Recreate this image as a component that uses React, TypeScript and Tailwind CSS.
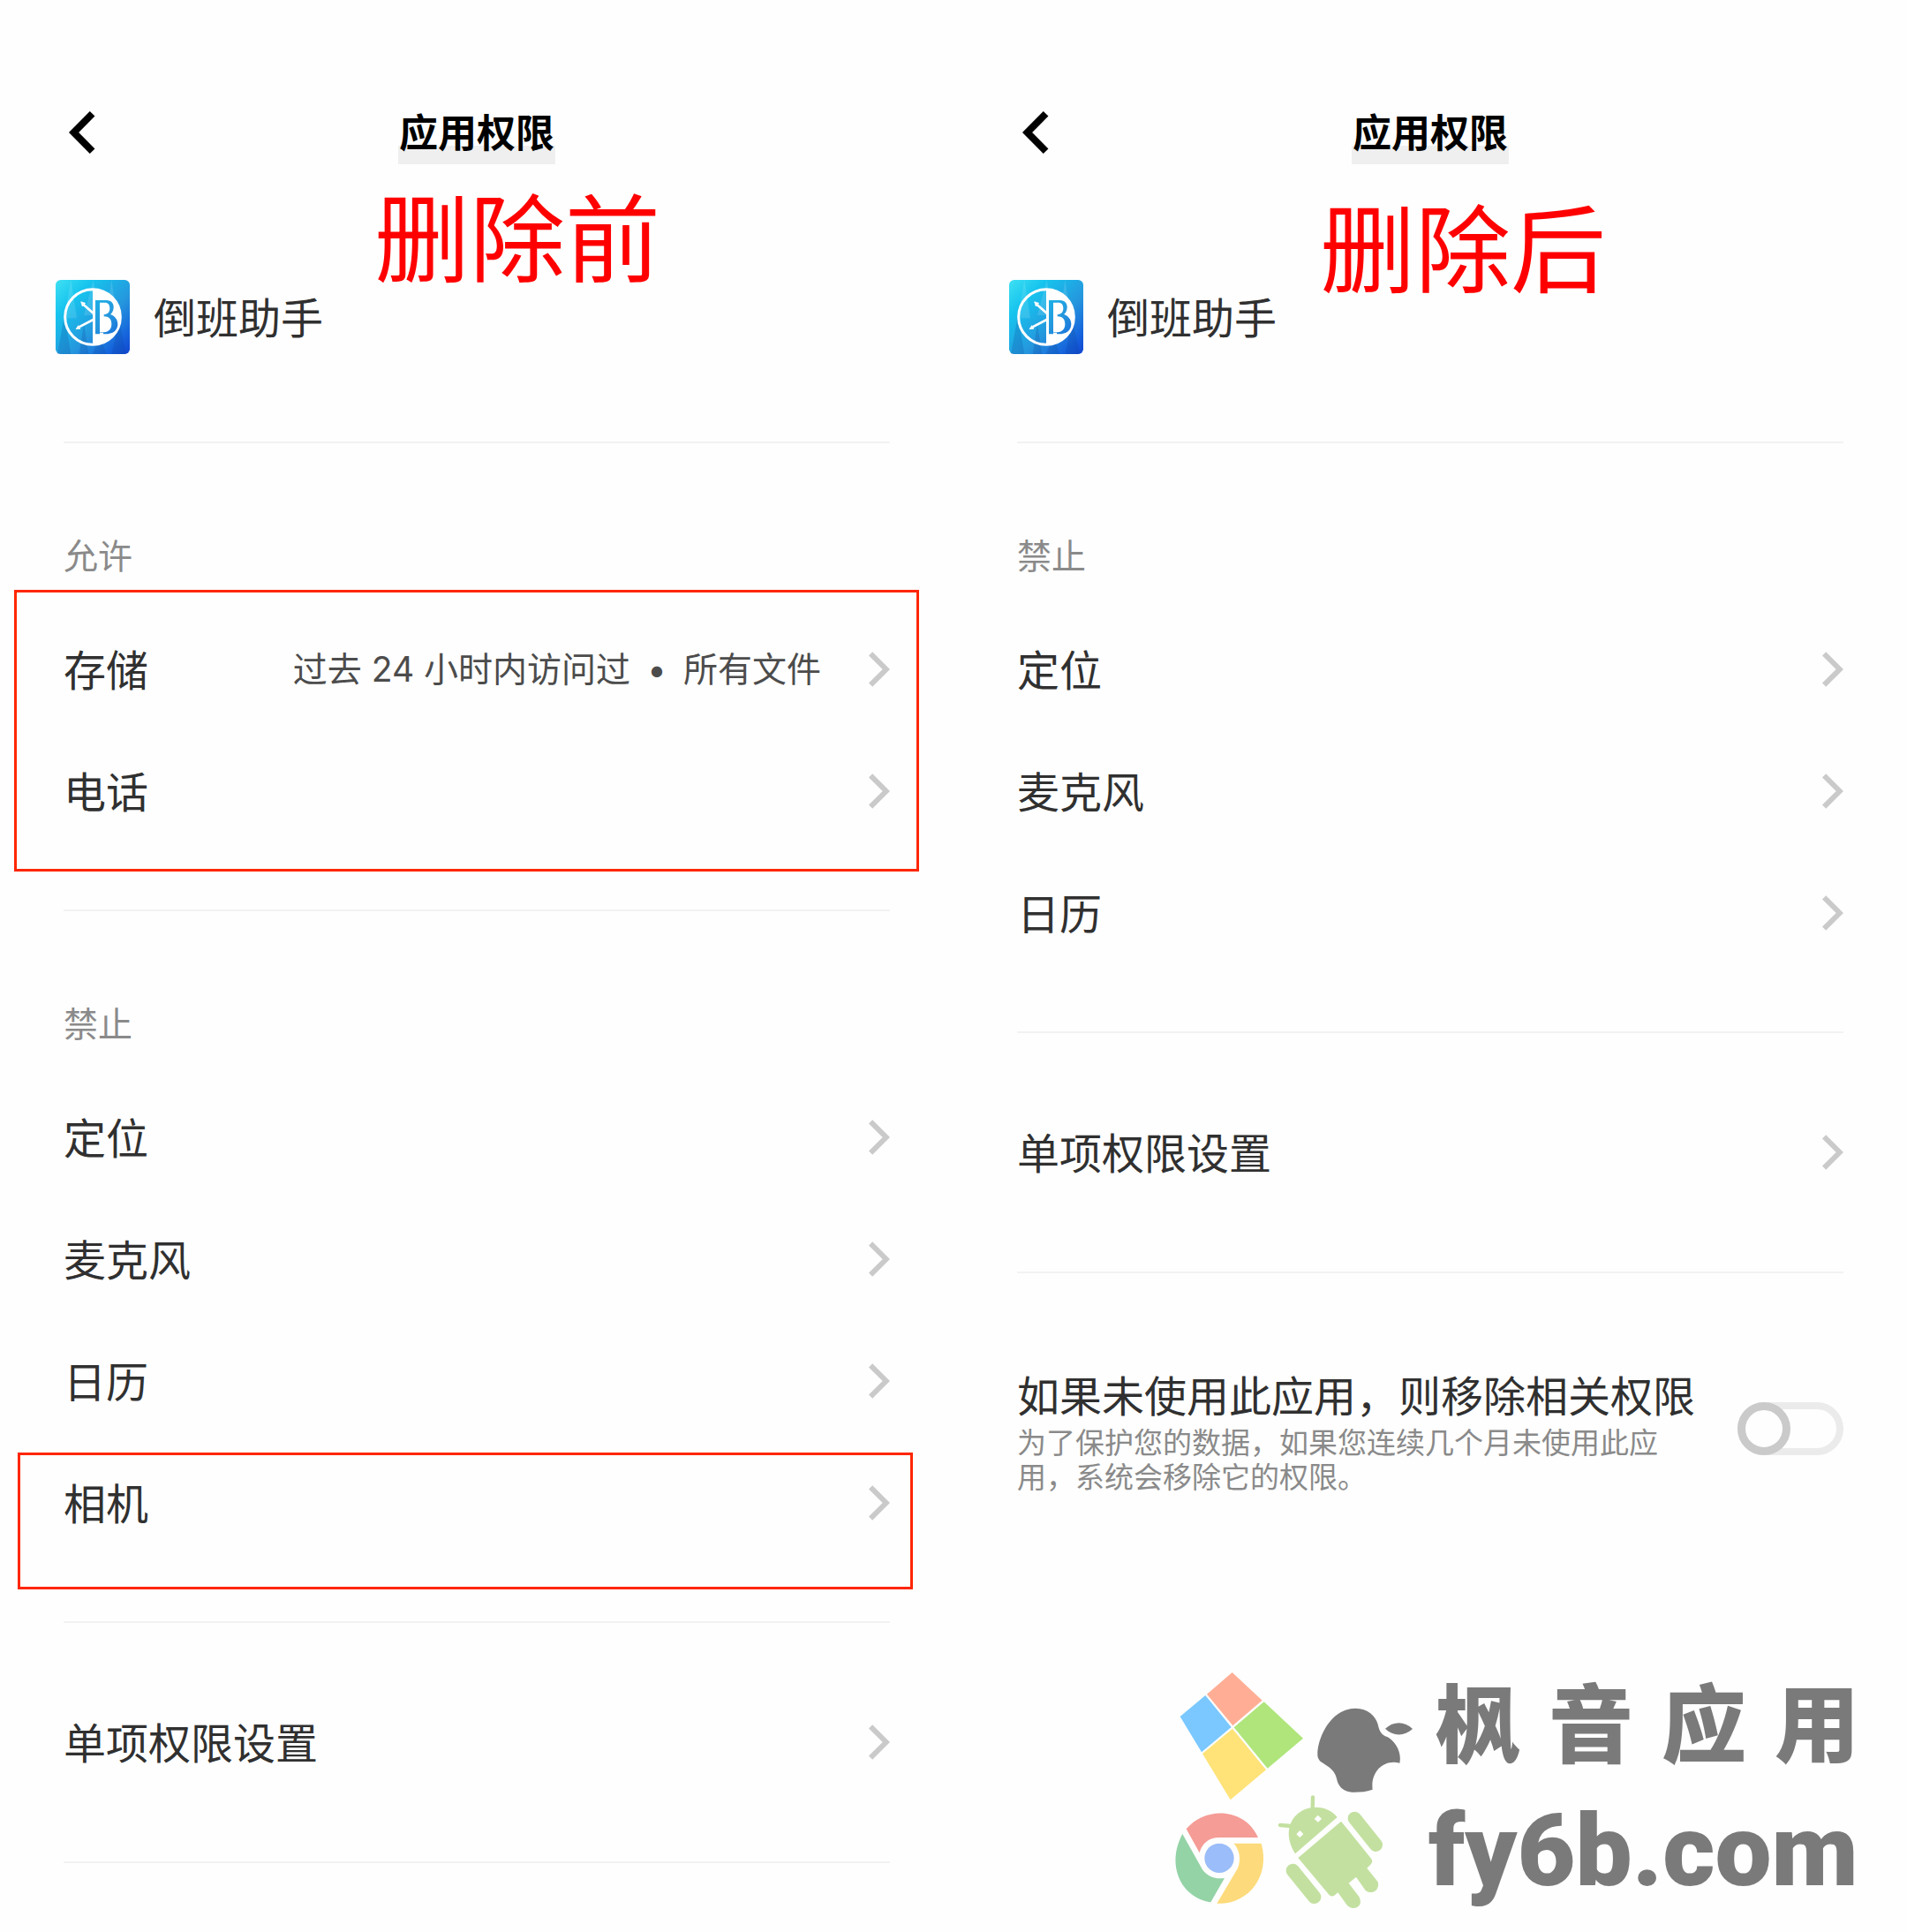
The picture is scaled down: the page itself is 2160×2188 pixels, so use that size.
import type { ReactNode } from "react";

const allowed = [
  {
    id: "storage",
    name: "存储",
    detail: ["过去 24 小时内访问过", "所有文件"],
  },
  { id: "phone", name: "电话" },
];

const denied = [
  { id: "location", name: "定位" },
  { id: "microphone", name: "麦克风" },
  { id: "calendar", name: "日历" },
];

const AppIcon = ({ id }: { id: string }) => (
  <svg viewBox="0 0 252 252" className="size-[84px]" aria-hidden="true">
    <defs>
      <linearGradient id={id} gradientUnits="userSpaceOnUse" x1="0" y1="0" x2="252" y2="252">
        <stop offset="0" stopColor="#3fe0f2" />
        <stop offset="0.25" stopColor="#16c4ee" />
        <stop offset="0.6" stopColor="#2597dd" />
        <stop offset="0.85" stopColor="#1663dc" />
        <stop offset="1" stopColor="#1145cf" />
      </linearGradient>
    </defs>
    <rect width="252" height="252" rx="17" fill={`url(#${id})`} />
    <g fill="#fff" opacity="0.12">
      <path d="M52 0 72 130 30 130z" />
      <path d="M128 0 150 120 96 120z" />
      <path d="M190 0 210 130 172 130z" />
    </g>
    <g fill="#0a3f96" opacity="0.2">
      <path d="M30 120 52 252 6 252z" />
      <path d="M96 150 112 252 80 252z" />
      <path d="M150 190 172 252 126 252z" />
      <path d="M216 140 240 252 190 252z" />
    </g>
    <circle cx="126" cy="126" r="94" fill="none" stroke="#fff" strokeWidth="9" />
    <path d="M126 30a96 96 0 0 1 0 192z" fill="#fff" />
    <g stroke="#fff" strokeWidth="8" fill="#fff">
      <path d="M128 113 94 83M128 135 78 161" />
      <path d="M86 74 101 79 91 90zM69 167 77 155 84 166z" strokeWidth="2" />
    </g>
    <path
      d="M135 69h37c19 0 26 13 25 26-1 11-6 18-11 22 16 6 25 18 25 33 0 22-17 34-42 34h-7v-5h-12v5h-15z"
      fill={`url(#${id})`}
    />
    <path
      d="M150 77h17c12 0 17 8 17 20 0 12-7 20-20 21v6c17 0 26 9 26 26 0 17-9 26-26 28h-14z"
      fill="#fff"
    />
  </svg>
);

const BackIcon = () => (
  <svg viewBox="0 0 30 48" className="h-12 w-[30px]" fill="none" aria-hidden="true">
    <path d="M26.6 2.8 5.6 24l21 21.2" stroke="#000" strokeWidth="8" />
  </svg>
);

const ChevronIcon = () => (
  <svg viewBox="0 0 24 40" className="h-10 w-6 shrink-0" fill="none" aria-hidden="true">
    <path d="M2.1 2.3 19.8 20 2.1 37.7" stroke="#cacaca" strokeWidth="6" />
  </svg>
);

const PlatformLogos = () => (
  <svg viewBox="0 0 900 930" className="h-[310px] w-[300px] shrink-0" aria-hidden="true">
    <path d="M257 72 359 167 259 253 171 146z" fill="#ffae95" />
    <path d="M166 150 254 258 153 343 80 222z" fill="#7ac8ff" />
    <path d="M365 172 498 296 377 398 263 259z" fill="#afe57a" />
    <path d="M258 263 372 403 251 505 156 348z" fill="#ffe379" />
    <g fill="#7a7a7a">
      <path d="M547 352C547 290 595 194 676 194c42 0 68 26 76 54 5 24 12 36 32 43 26 14 50 50 42 89-52-14-100 28-92 90-22 7-40 9-62 9-34 0-54-15-60-46-6-28-27-40-44-51-17-9-21-20-21-30z" />
      <path d="M777 263c28-26 66-26 93 1-28 26-66 26-93-1z" />
    </g>
    <path d="M101 604C167 526 300 532 345 633H213c-37 0-60 22-67 52z" fill="#f59c96" />
    <path d="M88 621 150 731c15 31 46 45 81 40l-47 82C84 838 31 727 88 621z" fill="#94d3a6" />
    <path d="M262 653h94c32 112-45 209-151 204l70-118c14-32 6-67-13-86z" fill="#fddb7c" />
    <circle cx="213" cy="703" r="50" fill="#9bbdf9" />
    <g fill="#c3e0a0">
      <path d="M471 688C432 627 448 565 498 540 544 518 592 535 614 564z" />
      <path d="M531 496 530 535M420 591 458 594" stroke="#c3e0a0" strokeWidth="13" strokeLinecap="round" />
      <path d="M627 578 729 704c6 8 4 15-2 21l-12 12 37 47c8 27-20 45-42 29l-32-46-25 21 35 46c19 38-25 50-42 27l-30-41-12 10c-6 4-14 2-18-3L481 702z" />
      <path d="M673 568 745 658M463 745 536 835" stroke="#c3e0a0" strokeWidth="46" strokeLinecap="round" />
    </g>
    <path d="M548 557 561 569 549 581 536 570zM487 609 499 621 487 633 475 622z" fill="#fefefe" />
  </svg>
);

const PermissionRow = ({ name, detail }: { name: string; detail?: string[] }) => (
  <button type="button" className="flex h-[138px] w-full items-center justify-between text-left">
    <span className="pb-[5px] text-[48px] leading-[72px] text-[#303030]">{name}</span>
    <span className="flex items-center gap-[54px]">
      {detail && (
        <span className="flex items-center gap-[19px] pb-px font-[Inter,'Noto_Sans_CJK_SC',sans-serif] text-[39px] leading-[60px] text-[#4c4c4c]">
          {detail[0]}
          <span>•</span>
          {detail[1]}
        </span>
      )}
      <ChevronIcon />
    </span>
  </button>
);

const SectionLabel = ({ children }: { children: ReactNode }) => (
  <h2 className="pt-[95px] pb-[32px] text-[39px] leading-[60px] text-[#8a8a8a]">
    {children}
  </h2>
);

const Header = ({ iconId }: { iconId: string }) => (
  <>
    <header className="grid grid-cols-[1fr_auto_1fr] items-center px-[78px] pt-[113px]">
      <button type="button" aria-label="返回" className="justify-self-start">
        <BackIcon />
      </button>
      <h1 className="bg-[linear-gradient(to_bottom,transparent_52px,#efefef_52px)] px-px pb-[2px] text-[44px] leading-[71px] font-bold text-black">
        应用权限
      </h1>
    </header>
    <div className="flex items-center gap-[27px] px-[63px] pt-[131px] pb-[99px]">
      <AppIcon id={iconId} />
      <span className="pb-[4px] text-[48px] leading-[72px] text-[#303030]">倒班助手</span>
    </div>
  </>
);

const Divider = () => <hr className="h-[2px] border-0 bg-[#f2f2f2]" />;

const App = () => {
  return (
    <main className="grid min-h-screen grid-cols-2 bg-[#fefefe] font-['Noto_Sans_CJK_SC',sans-serif]">
      <section className="relative">
        <Header iconId="icon-before" />
        <p className="absolute top-[184px] left-[424px] text-[108px] leading-[160px] text-[#ff0000]">
          删除前
        </p>
        <div className="px-[72px]">
          <Divider />
          <SectionLabel>允许</SectionLabel>
          <div className="relative mb-[65px]">
            {allowed.map((item) => (
              <PermissionRow key={item.id} name={item.name} detail={item.detail} />
            ))}
            <div className="pointer-events-none absolute -top-[21px] -right-[33px] -bottom-[22px] -left-[56px] border-3 border-[#ff2600]" />
          </div>
          <Divider />
          <SectionLabel>禁止</SectionLabel>
          {denied.map((item) => (
            <PermissionRow key={item.id} name={item.name} />
          ))}
          <div className="relative mb-[65px]">
            <PermissionRow name="相机" />
            <div className="pointer-events-none absolute top-[12px] -right-[26px] -bottom-[29px] -left-[52px] border-3 border-[#ff2600]" />
          </div>
          <Divider />
          <div className="py-[66px]">
            <PermissionRow name="单项权限设置" />
          </div>
          <Divider />
        </div>
      </section>

      <section className="relative">
        <Header iconId="icon-after" />
        <p className="absolute top-[196px] left-[415px] text-[108px] leading-[160px] text-[#ff0000]">
          删除后
        </p>
        <div className="px-[72px]">
          <Divider />
          <SectionLabel>禁止</SectionLabel>
          <div className="mb-[65px]">
            {denied.map((item) => (
              <PermissionRow key={item.id} name={item.name} />
            ))}
          </div>
          <Divider />
          <div className="py-[66px]">
            <PermissionRow name="单项权限设置" />
          </div>
          <Divider />
          <label className="flex items-center justify-between pt-[101px]">
            <span className="max-w-[768px] pb-[2px]">
              <span className="block text-[48px] leading-[70px] text-[#303030]">
                如果未使用此应用，则移除相关权限
              </span>
              <span className="block text-[33px] leading-[39px] text-[#8a8a8a]">
                为了保护您的数据，如果您连续几个月未使用此应用，系统会移除它的权限。
              </span>
            </span>
            <input
              type="checkbox"
              role="switch"
              className="h-[60px] w-[120px] shrink-0 appearance-none rounded-full border-8 border-[#ebebeb] before:-m-2 before:block before:size-[60px] before:rounded-full before:border-9 before:border-[#cacaca] before:bg-[#fefefe] before:content-[''] checked:before:ml-[52px]"
            />
          </label>
        </div>
        <div className="flex justify-end gap-2 pt-[177px] pr-[54px]">
          <PlatformLogos />
          <div className="w-[488px] pt-[12px] text-[#7a7a7a]">
            <div className="flex justify-between pl-2 text-[96px] leading-[130px] font-black">
              <span>枫</span>
              <span>音</span>
              <span>应</span>
              <span>用</span>
            </div>
            <div className="font-[Roboto,sans-serif] text-[114px] leading-[168px] font-black">
              fy6b.com
            </div>
          </div>
        </div>
      </section>
    </main>
  );
};

export default App;
